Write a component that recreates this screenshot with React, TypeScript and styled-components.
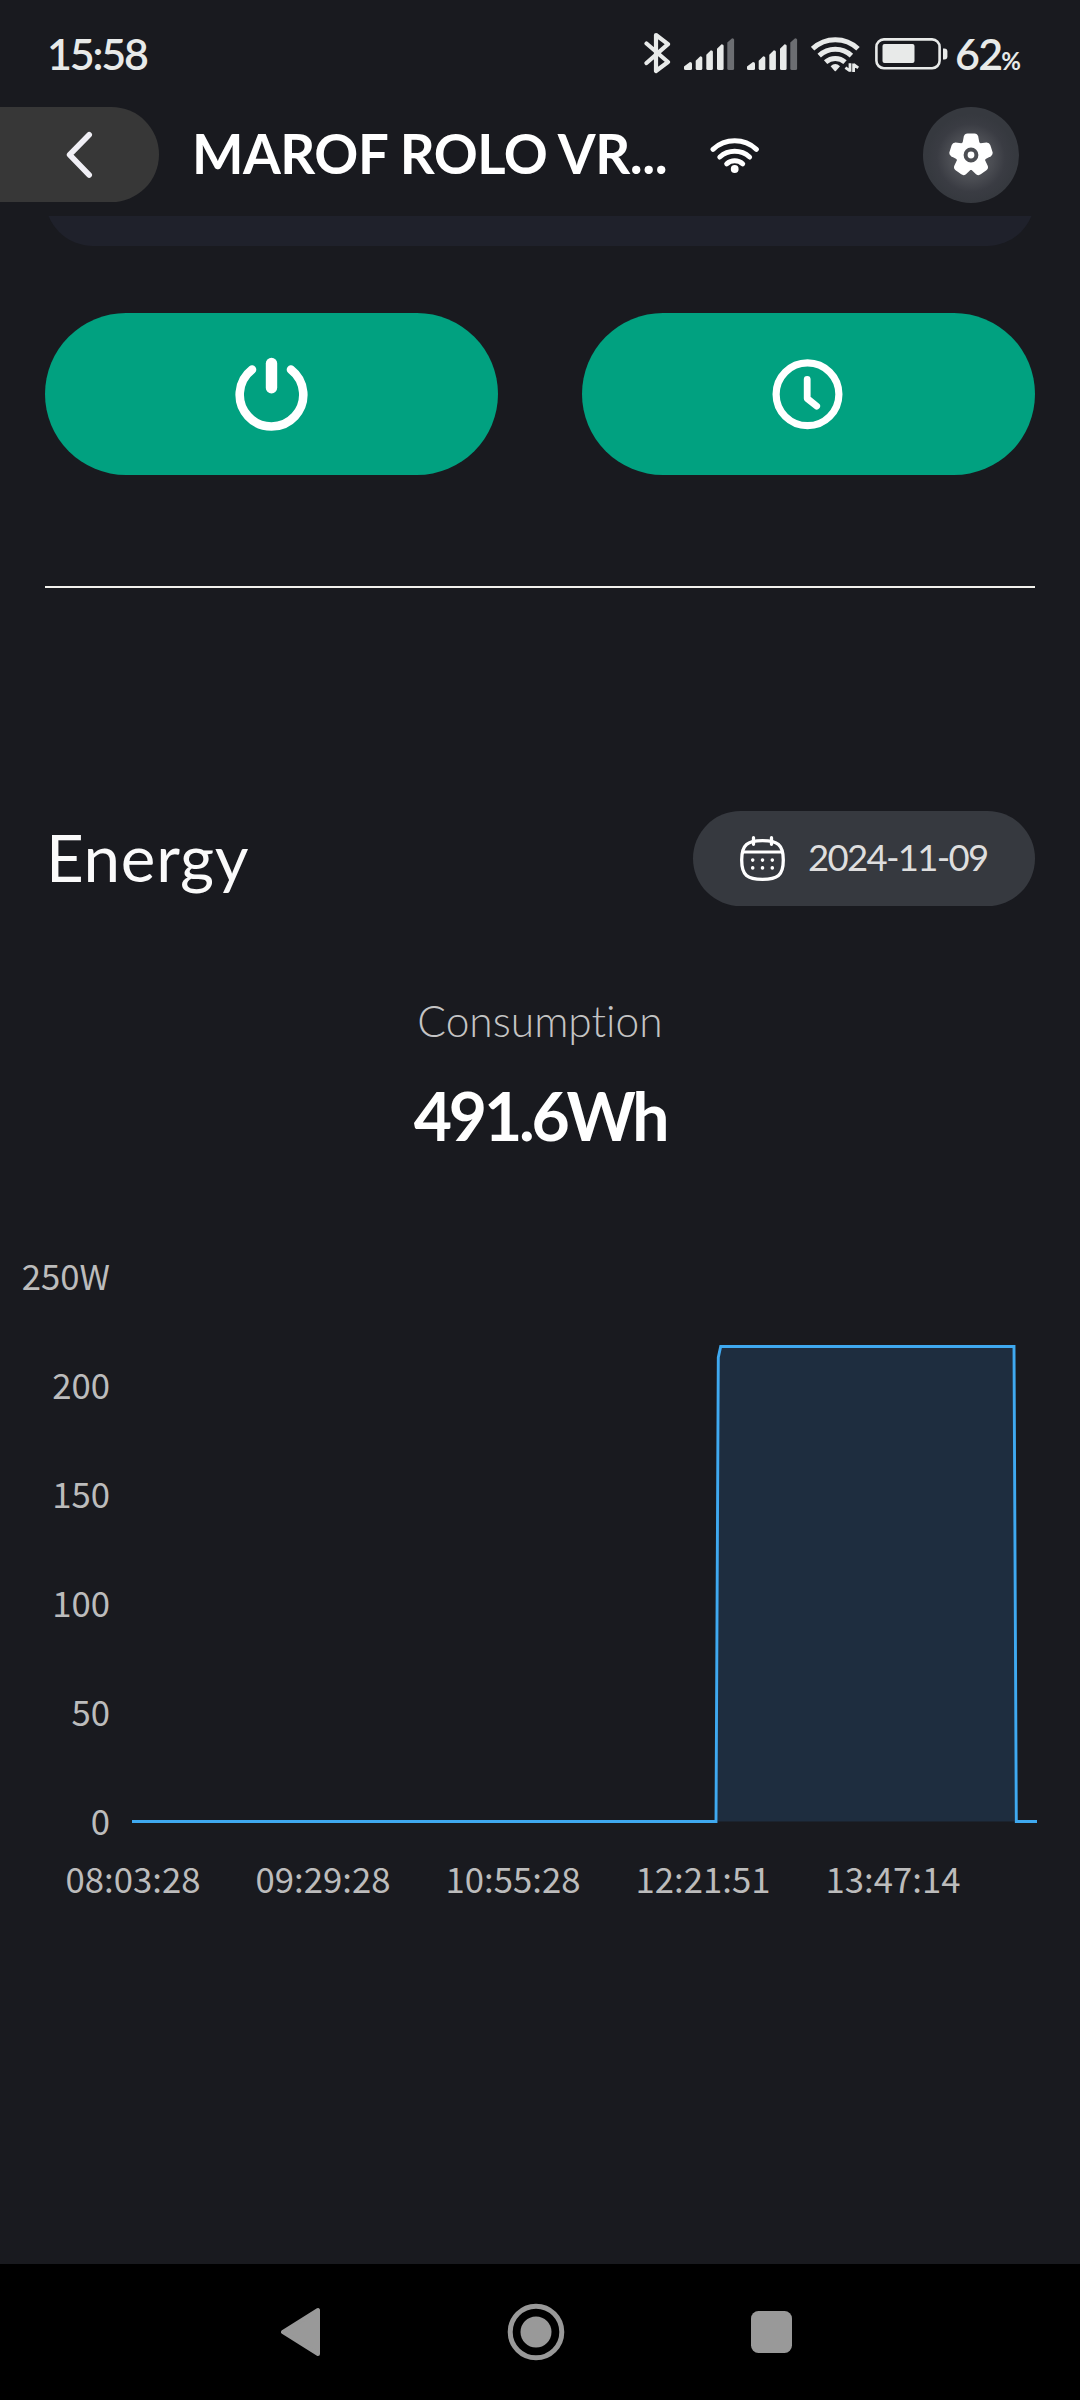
import React from "react";
import styled, { createGlobalStyle } from "styled-components";

const GlobalStyle = createGlobalStyle`
  * { box-sizing: border-box; }
  html, body { margin: 0; padding: 0; background: #191a1f; }
  svg { display: block; flex: none; }
  button { border: 0; padding: 0; margin: 0; font: inherit; color: inherit; }
`;

const Screen = styled.div`
  width: 1080px;
  height: 2400px;
  display: flex;
  flex-direction: column;
  overflow: hidden;
  background: #191a1f;
  color: #fff;
  font-family: Lato, "Open Sans", sans-serif;
  font-variant-ligatures: none;
`;

const StatusBar = styled.div`
  height: 107px;
  padding: 0 58px 0 47px;
  display: flex;
  justify-content: space-between;
  align-items: flex-start;
  color: #e8eae9;
`;

const Clock = styled.span`
  margin-top: 28px;
  font-size: 43px;
  line-height: 52px;
  font-weight: 600;
  letter-spacing: -2.2px;
`;

const StatusIcons = styled.div`
  display: flex;
  align-items: flex-start;
`;

const Percent = styled.span`
  display: flex;
  align-items: baseline;
  width: 67px;
  margin-top: 28px;
  font-size: 43px;
  line-height: 52px;
  font-weight: 600;
  letter-spacing: -1.8px;
  white-space: nowrap;
`;

const PercentSign = styled.span`
  font-size: 24px;
  font-weight: 700;
  letter-spacing: 0;
`;

const Header = styled.header`
  height: 95px;
  display: flex;
  align-items: center;
  padding-right: 61px;
`;

const BackButton = styled.button`
  width: 159px;
  height: 95px;
  padding-left: 63px;
  display: flex;
  align-items: center;
  background: #373737;
  border-radius: 0 47.5px 47.5px 0;
`;

const Title = styled.h1`
  margin: -3px 0 0 33px;
  width: 488px;
  font-size: 54.5px;
  line-height: 66px;
  font-weight: 700;
  letter-spacing: -0.5px;
  white-space: nowrap;
`;

const WifiSlot = styled.div`
  margin-left: 30px;
  margin-right: auto;
  margin-top: 1px;
`;

const SettingsButton = styled.button`
  width: 96px;
  height: 96px;
  border-radius: 50%;
  display: flex;
  align-items: center;
  justify-content: center;
  background: radial-gradient(circle at 50% 53%, #5c5e63 0, #4a4c52 22px, #3a3c43 34px, #36393f 44px);
`;

const Content = styled.main`
  flex: 1;
  margin-top: 14px;
  display: flex;
  flex-direction: column;
  overflow: hidden;
`;

const CardTail = styled.div`
  flex: none;
  height: 30px;
  overflow: hidden;
  padding: 0 45px;
  display: flex;
  align-items: flex-end;
`;

const Card = styled.div`
  flex: 1;
  height: 120px;
  border-radius: 48px;
  background: #1f212b;
`;

const Actions = styled.div`
  display: flex;
  gap: 84px;
  padding: 0 45px;
  margin-top: 67px;
`;

const ActionButton = styled.button`
  flex: 1;
  height: 162px;
  border-radius: 81px;
  display: flex;
  align-items: center;
  justify-content: center;
  background: #01a180;
`;

const Divider = styled.hr`
  flex: none;
  width: 990px;
  height: 2px;
  margin: 111px 45px 0;
  border: 0;
  background: #f2f1ec;
`;

const EnergyHead = styled.div`
  margin-top: 223px;
  padding: 0 45px 0 46px;
  height: 95px;
  display: flex;
  align-items: center;
  justify-content: space-between;
`;

const EnergyTitle = styled.h2`
  margin: -4px 0 0;
  font-size: 65.5px;
  line-height: 78px;
  font-weight: 400;
  letter-spacing: 0.7px;
  color: #fafafa;
`;

const DatePill = styled.button`
  width: 342px;
  height: 95px;
  border-radius: 47.5px;
  padding: 0 46px 0 46px;
  display: flex;
  align-items: center;
  gap: 23px;
  background: #36393f;
`;

const DateText = styled.span`
  margin-top: -3px;
  font-size: 36.5px;
  line-height: 44px;
  font-weight: 400;
  letter-spacing: -1.7px;
  white-space: nowrap;
  color: #dedede;
`;

const Summary = styled.div`
  display: flex;
  flex-direction: column;
  align-items: center;
  margin-top: 89px;
`;

const SummaryLabel = styled.span`
  font-size: 42.5px;
  line-height: 52px;
  font-weight: 300;
  letter-spacing: 0;
  color: #c4c4c4;
`;

const SummaryValue = styled.span`
  margin-top: 29px;
  font-size: 66px;
  line-height: 80px;
  font-weight: 700;
  letter-spacing: -3.2px;
`;

const ChartArea = styled.section`
  margin-top: 101px;
  font-family: "Noto Sans CJK SC", "Noto Sans", sans-serif;
  font-size: 34.7px;
  color: #bcbcbc;
`;

const PlotRow = styled.div`
  display: flex;
`;

const YAxis = styled.div`
  width: 110px;
  height: 585px;
  margin-top: -2px;
  display: flex;
  flex-direction: column;
  justify-content: space-between;
  align-items: flex-end;
`;

const XAxis = styled.div`
  display: flex;
  margin-top: 16px;
  padding-left: 38px;
`;

const YTick = styled.span`
  line-height: 40px;
`;

const XTick = styled.span`
  width: 190px;
  line-height: 40px;
  text-align: center;
`;

const NavBar = styled.nav`
  height: 136px;
  background: #000;
  display: flex;
  align-items: center;
  padding-left: 281px;
`;

const NavItem = styled.div<{ $gap?: number }>`
  margin-left: ${(p) => p.$gap ?? 0}px;
`;

const BARS = [
  { x: 0, w: 8, top: 24 },
  { x: 11.7, w: 6.6, top: 18.3 },
  { x: 22.3, w: 6.6, top: 12.3 },
  { x: 33, w: 6.6, top: 6.3 },
  { x: 43.3, w: 6.8, top: 0.2 },
];

const Signal = () => (
  <svg width="51" height="32" viewBox="0 0 51 32">
    {BARS.map((b, i) => (
      <path
        key={i}
        d={`M${b.x} ${b.top + 4.4}L${b.x + b.w - 2} ${b.top}Q${b.x + b.w} ${b.top} ${b.x + b.w} ${b.top + 1.5}V30.5Q${b.x + b.w} 32 ${b.x + b.w - 1.5} 32H${b.x + 1.5}Q${b.x} 32 ${b.x} 30.5Z`}
        fill={i === 4 ? "#6c6e72" : "#e8eae9"}
      />
    ))}
  </svg>
);

const At = styled.div<{ $top: number; $left?: number }>`
  margin-top: ${(p) => p.$top}px;
  margin-left: ${(p) => p.$left ?? 0}px;
`;

const Bluetooth = () => (
  <svg width="27" height="42" viewBox="0 0 27 42">
    <path
      d="M2.5 11.5L24 30L12 39V3L24 12.2L2.5 31"
      fill="none"
      stroke="#e8eae9"
      strokeWidth="4.2"
      strokeLinecap="round"
      strokeLinejoin="round"
    />
  </svg>
);

const WifiStatus = () => (
  <svg width="49" height="37" viewBox="0 0 49 37">
    <g fill="none" stroke="#e8eae9" strokeWidth="5">
      <path d="M1.6 12.8A33 33 0 0 1 47 12.8" />
      <path d="M8.2 19.6A23.6 23.6 0 0 1 40.4 19.6" />
      <path d="M14.6 26.2A14.6 14.6 0 0 1 34 26.2" />
    </g>
    <path d="M19.6 30.2Q24.3 25.8 29 30.2L24.9 35Q24.3 35.6 23.7 35Z" fill="#e8eae9" />
    <path
      d="M39 27.2V35.8M39 34.8L34.4 31.6M42.6 36V27.4M42.6 28.4L47.2 31.8"
      fill="none"
      stroke="#e8eae9"
      strokeWidth="2.8"
    />
  </svg>
);

const Battery = () => (
  <svg width="73" height="32" viewBox="0 0 73 32">
    <rect x="1.4" y="1.4" width="63.2" height="28.8" rx="7.5" fill="none" stroke="#e8eae9" strokeWidth="2.6" />
    <rect x="7.5" y="6" width="32" height="19" rx="2" fill="#e8eae9" />
    <path d="M68 10.5h1.4q3 0 3 3v5q0 3-3 3H68z" fill="#e8eae9" />
  </svg>
);

const WifiHeader = () => (
  <svg width="50" height="38" viewBox="0 0 50 38">
    <g fill="none" stroke="#fff" strokeWidth="5" strokeLinecap="round">
      <path d="M3 13.3A32 32 0 0 1 46.4 13.3" />
      <path d="M9.8 21A22.5 22.5 0 0 1 39.6 21" />
      <path d="M16.7 27.8A12 12 0 0 1 32.7 27.8" />
    </g>
    <circle cx="24.7" cy="33" r="3.9" fill="#fff" />
  </svg>
);

const Gear = () => (
  <svg width="44" height="44" viewBox="-22 -22 44 44">
    <g fill="#fff">
      <circle r="15" />
      {[0, 72, 144, 216, 288].map((a) => (
        <path key={a} transform={`rotate(${a})`} d="M-9 -9L-7.2 -18.5Q-6.4 -21.4 -3.5 -21.4H3.5Q6.4 -21.4 7.2 -18.5L9 -9Z" />
      ))}
    </g>
    <circle r="5.4" fill="#fff" stroke="#4c4e53" strokeWidth="4" />
  </svg>
);

const Power = () => (
  <svg width="74" height="74" viewBox="-36.5 -37 74 74">
    <path d="M-19.5 -24.4A31.8 31.8 0 1 0 19.5 -24.4" fill="none" stroke="#fff" strokeWidth="8.6" strokeLinecap="round" />
    <path d="M0 -30.5V-6.3" stroke="#fff" strokeWidth="11.4" strokeLinecap="round" />
  </svg>
);

const TimerIcon = () => (
  <svg width="74" height="74" viewBox="-35.5 -37.3 74 74">
    <circle r="31.4" fill="none" stroke="#fff" strokeWidth="7.2" />
    <path d="M-.3 -15V4.2L9.2 11.8" fill="none" stroke="#fff" strokeWidth="6.8" strokeLinecap="round" strokeLinejoin="round" />
  </svg>
);

const CalendarIcon = () => (
  <svg width="46" height="46" viewBox="-0.5 0.5 46 46">
    <g fill="none" stroke="#fff" strokeWidth="3.3" strokeLinecap="round">
      <path d="M23 5.2C38 5.2 43.8 9 43.8 24.5S38 43.8 23 43.8S2.2 40 2.2 24.5S8 5.2 23 5.2Z" />
      <path d="M3.4 16.4H42.6" strokeWidth="3" />
      <path d="M14 2.2V8.8M32 2.2V8.8" />
    </g>
    <g fill="#fff">
      {[13.2, 23, 32.8].map((x) => (
        <React.Fragment key={x}>
          <circle cx={x} cy="24.6" r="1.8" />
          <circle cx={x} cy="32.4" r="1.8" />
        </React.Fragment>
      ))}
    </g>
  </svg>
);

const Y_TICKS = ["250W", "200", "150", "100", "50", "0"];
const X_TICKS = ["08:03:28", "09:29:28", "10:55:28", "12:21:51", "13:47:14"];

const App = () => (
  <>
    <GlobalStyle />
    <Screen>
      <StatusBar>
        <Clock>15:58</Clock>
        <StatusIcons>
          <At $top={32}><Bluetooth /></At>
          <At $top={38} $left={13}><Signal /></At>
          <At $top={38} $left={12}><Signal /></At>
          <At $top={36} $left={13}><WifiStatus /></At>
          <At $top={38} $left={15}><Battery /></At>
          <At $top={0} $left={7}>
            <Percent>62<PercentSign>%</PercentSign></Percent>
          </At>
        </StatusIcons>
      </StatusBar>

      <Header>
        <BackButton aria-label="Back">
          <svg width="32" height="50" viewBox="0 0 32 50">
            <path d="M26.2 4.8L6.6 24.8L26.2 45" fill="none" stroke="#f0eff5" strokeWidth="5.6" strokeLinecap="round" strokeLinejoin="round" />
          </svg>
        </BackButton>
        <Title>MAROF ROLO VR...</Title>
        <WifiSlot><WifiHeader /></WifiSlot>
        <SettingsButton aria-label="Settings"><Gear /></SettingsButton>
      </Header>

      <Content>
        <CardTail><Card /></CardTail>
        <Actions>
          <ActionButton aria-label="Power"><Power /></ActionButton>
          <ActionButton aria-label="Timer"><TimerIcon /></ActionButton>
        </Actions>
        <Divider />
        <EnergyHead>
          <EnergyTitle>Energy</EnergyTitle>
          <DatePill>
            <CalendarIcon />
            <DateText>2024-11-09</DateText>
          </DatePill>
        </EnergyHead>
        <Summary>
          <SummaryLabel>Consumption</SummaryLabel>
          <SummaryValue>491.6Wh</SummaryValue>
        </Summary>
        <ChartArea>
          <PlotRow>
            <YAxis>
              {Y_TICKS.map((t) => <YTick key={t}>{t}</YTick>)}
            </YAxis>
            <svg width="970" height="585" viewBox="110 0 970 585">
              <path d="M716 564.5L718.3 100.5L720.7 89.5H1014L1016.3 564.5Z" fill="#1e2d3f" />
              <path d="M132 564.5H716L718.3 100.5L720.7 89.5H1014L1016.3 564.5H1037" fill="none" stroke="#3fa9f0" strokeWidth="2.9" />
            </svg>
          </PlotRow>
          <XAxis>
            {X_TICKS.map((t) => <XTick key={t}>{t}</XTick>)}
          </XAxis>
        </ChartArea>
      </Content>

      <NavBar>
        <NavItem>
          <svg width="40" height="50" viewBox="0 0 40 50">
            <path d="M2 25L37 3V47Z" fill="#999" stroke="#999" strokeWidth="4" strokeLinejoin="round" />
          </svg>
        </NavItem>
        <NavItem $gap={186}>
          <svg width="58" height="58" viewBox="-29 -29 58 58">
            <circle r="25.8" fill="none" stroke="#999" strokeWidth="5" />
            <circle r="15.5" fill="#999" />
          </svg>
        </NavItem>
        <NavItem $gap={186}>
          <svg width="41" height="42" viewBox="0 0 41 42">
            <rect width="41" height="42" rx="7.5" fill="#999" />
          </svg>
        </NavItem>
      </NavBar>
    </Screen>
  </>
);

export default App;
